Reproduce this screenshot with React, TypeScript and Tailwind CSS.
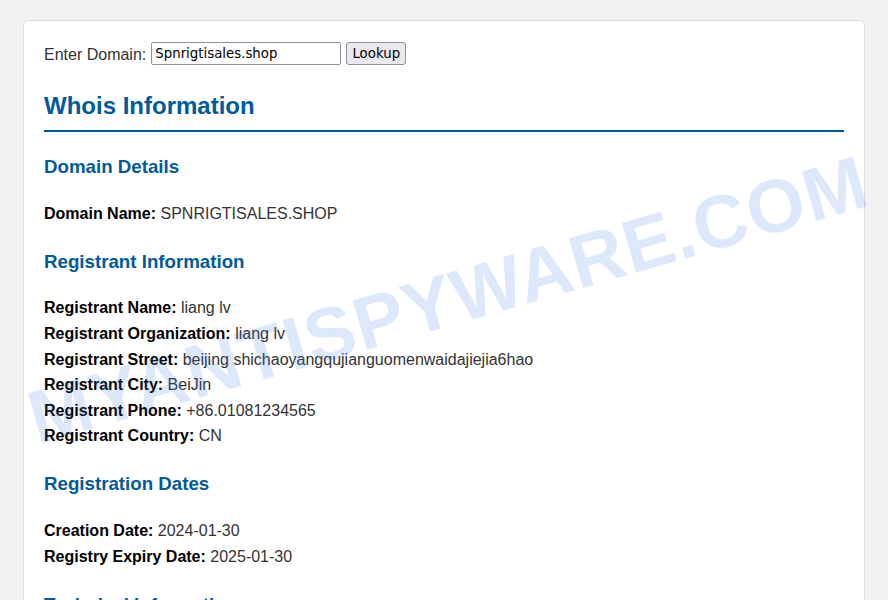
import React from 'react';

type Row = { label: string; value: string };
type Section = { title: string; rows: Row[] };

const sections: Section[] = [
  {
    title: 'Domain Details',
    rows: [{ label: 'Domain Name', value: 'SPNRIGTISALES.SHOP' }],
  },
  {
    title: 'Registrant Information',
    rows: [
      { label: 'Registrant Name', value: 'liang lv' },
      { label: 'Registrant Organization', value: 'liang lv' },
      { label: 'Registrant Street', value: 'beijing shichaoyangqujianguomenwaidajiejia6hao' },
      { label: 'Registrant City', value: 'BeiJin' },
      { label: 'Registrant Phone', value: '+86.01081234565' },
      { label: 'Registrant Country', value: 'CN' },
    ],
  },
  {
    title: 'Registration Dates',
    rows: [
      { label: 'Creation Date', value: '2024-01-30' },
      { label: 'Registry Expiry Date', value: '2025-01-30' },
    ],
  },
  {
    title: 'Technical Information',
    rows: [
      { label: 'Name Server', value: 'NS1.DNSOWL.COM' },
      { label: 'Name Server', value: 'NS2.DNSOWL.COM' },
    ],
  },
];

const App: React.FC = () => {
  return (
    <div className="relative min-h-screen overflow-hidden bg-[#f2f2f2] pt-5 font-['Liberation_Sans',Arial,sans-serif] text-[16px] leading-[1.6] text-[#333]">
      <div className="mx-auto w-[842px] rounded-[5px] border border-[#dcdcdc] bg-white p-5">
        {/* Lookup form */}
        <div className="mb-5 flex h-[25.6px] items-center">
          <span className="mt-[2px]">Enter Domain:</span>
          <input
            defaultValue="Spnrigtisales.shop"
            className="ml-[5px] h-[23px] w-[190px] rounded-[2px] border border-[#8f8f9d] px-[3px] font-['DejaVu_Sans',sans-serif] text-[13.33px] text-black outline-none"
          />
          <button className="ml-[5px] h-[23px] w-[60px] rounded-[3px] border border-[#8f8f9d] bg-[#e9e9ed] font-['DejaVu_Sans',sans-serif] text-[13.33px] text-black">
            Lookup
          </button>
        </div>

        <h2 className="mb-5 border-b-2 border-[#005a9c] pb-[5px] text-[24px] font-bold leading-[1.6] text-[#005a9c]">
          Whois Information
        </h2>

        {sections.map((section) => (
          <div key={section.title} className="mb-[20.5px]">
            <h3 className="mb-[18.72px] text-[18.72px] font-bold leading-[1.6] text-[#005a9c]">
              {section.title}
            </h3>
            {section.rows.map((row, i) => (
              <div key={i}>
                <strong className="font-bold text-black">{row.label}:</strong> {row.value}
              </div>
            ))}
          </div>
        ))}
      </div>

      {/* watermark */}
      <div className="pointer-events-none absolute left-[448px] top-[300px] -translate-x-1/2 -translate-y-1/2 -rotate-[16deg] whitespace-nowrap text-[75px] font-bold leading-none tracking-[1px] text-[#3d7eea] opacity-[0.17]">
        MYANTISPYWARE.COM
      </div>
    </div>
  );
};

export default App;
